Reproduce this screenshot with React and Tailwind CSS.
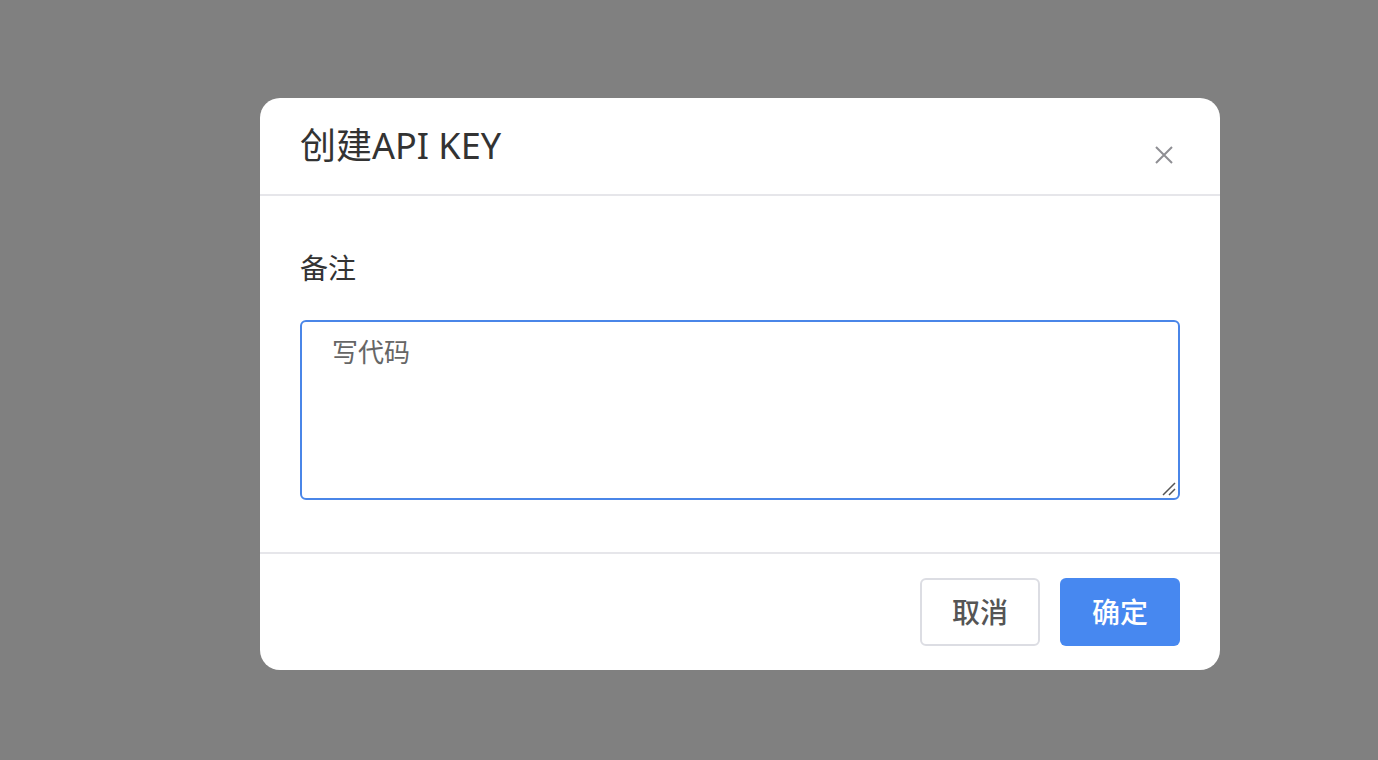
export default function App() {
  const font = { fontFamily: '"Noto Sans", "Noto Sans CJK SC", sans-serif' };
  return (
    <div className="w-[1378px] h-[760px] bg-[#808080] overflow-hidden pt-[98px] pl-[260px]" style={font}>
      <div className="w-[960px] h-[572px] bg-white rounded-[20px] flex flex-col overflow-hidden">
        <div className="h-[96px] flex items-center justify-between pl-[40px] pr-[46px] border-b-2 border-[#e6e6ea] box-content">
          <div className="text-[36px] leading-[44px] text-[#333333]">创建API KEY</div>
          <svg width="20" height="20" viewBox="0 0 20 20" className="translate-y-[9px]">
            <path d="M2 2 L18 18 M18 2 L2 18" stroke="#8e8e93" strokeWidth="2" fill="none" />
          </svg>
        </div>
        <div className="px-[40px] pt-[52px] pb-[52px] border-b-2 border-[#e6e6ea] flex flex-col gap-[32px]">
          <div className="text-[28px] leading-[40px] text-[#333333]">备注</div>
          <div className="relative w-[880px] h-[180px]">
            <textarea
              className="block w-[880px] h-[180px] resize-none border-2 border-[#4a86e8] rounded-[6px] px-[30px] pt-[12px] text-[26px] leading-[36px] text-[#666666] outline-none"
              style={font}
              defaultValue="写代码"
            />
            <svg width="14" height="14" viewBox="0 0 14 14" className="absolute right-[4px] bottom-[4px]">
              <path d="M1 13 L13 1 M7 13 L13 7" stroke="#555555" strokeWidth="1.5" fill="none" />
            </svg>
          </div>
        </div>
        <div className="flex-1 flex items-center justify-end gap-[20px] pr-[40px]">
          <button className="w-[120px] h-[68px] border-2 border-[#dcdde3] rounded-[6px] bg-white text-[28px] font-medium text-[#555555]">取消</button>
          <button className="w-[120px] h-[68px] rounded-[6px] bg-[#4788f0] text-[28px] font-medium text-white">确定</button>
        </div>
      </div>
    </div>
  );
}
